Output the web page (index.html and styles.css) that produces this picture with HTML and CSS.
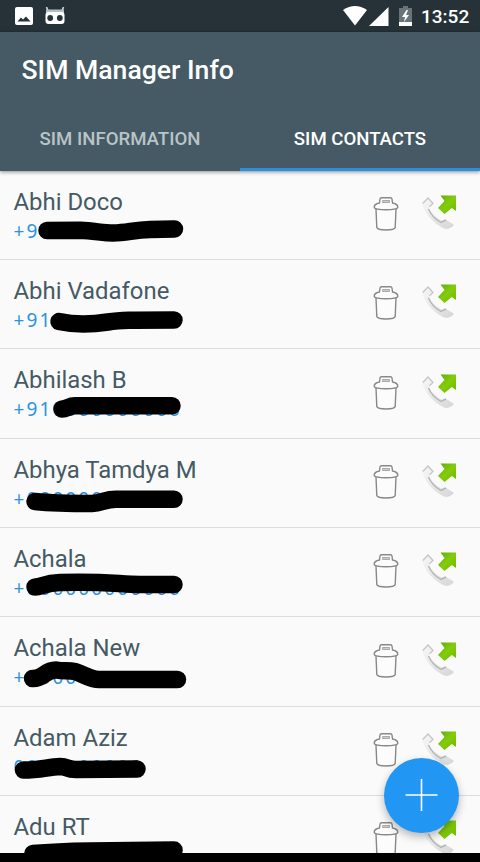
FILE: index.html
```html
<!DOCTYPE html>
<html lang="en">

<head>
  <meta charset="UTF-8" />
  <meta name="viewport" content="width=device-width, initial-scale=1.0" />
  <title>SIM Manager Info</title>
  <link rel="stylesheet" href="styles.css">
</head>

<body>
  <!-- shared icons -->
  <svg class="defs" width="0" height="0">
    <defs>
      <linearGradient id="green" x1="0" y1="0" x2="1" y2="1">
        <stop offset="0" stop-color="#5da80e" />
        <stop offset="0.5" stop-color="#84cc0a" />
        <stop offset="1" stop-color="#6db600" />
      </linearGradient>
      <linearGradient id="grey" x1="0" y1="0" x2="1" y2="1">
        <stop offset="0" stop-color="#f8f8f8" />
        <stop offset="1" stop-color="#d6d6d6" />
      </linearGradient>
      <symbol id="trash" viewBox="0 0 26 36">
        <path d="M3 13 L3.800 31.500 Q4.500 34 13 34 Q21.500 34 22.200 31.500 L23 13" fill="#fcfcfc" stroke="#888" stroke-width="1.4" />
        <path d="M1.200 11.500 Q1 8 6.500 7 L7 3 Q7.200 1.800 8.500 1.800 L17.500 1.800 Q18.800 1.800 19 3 L19.500 7 Q25 8 24.800 11.500 Q24 13.700 13 13.700 Q2 13.700 1.200 11.500 Z" fill="#fcfcfc" stroke="#888" stroke-width="1.4" />
        <path d="M9.500 6.500 V4.500 H16.500 V6.500 Z" fill="#ccc" stroke="#999" stroke-width=".8" />
      </symbol>
      <symbol id="call" viewBox="0 0 36 36">
        <path d="M1.500 8 L6.500 3.500 Q7.500 3 8.500 4 L12.500 9 L8 14 Q12 22 20.500 26.500 L24.500 25.500 L32.500 30.500 Q33 31.500 31.500 32.500 Q26.500 37 20 33 Q7 25.500 2 12.500 Q.8 9.500 1.500 8 Z" fill="url(#grey)" />
        <path d="M7.500 15 Q11 23.500 20 28.500 L25 26" fill="none" stroke="#b5b5b5" stroke-width="1.4" />
        <path d="M1.800 9.500 L7 4 L12 9.500 L8.500 12.800" fill="none" stroke="#c6c6c6" stroke-width="1.2" />
        <path d="M19.500 1.500 H35 V17 L30.800 14 L23.500 20 L17 14 L23.500 7 Z" fill="url(#green)" />
      </symbol>
    </defs>
  </svg>

  <div class="status-bar">
    <svg class="picture" width="18" height="18" viewBox="0 0 18 18">
      <rect x="0" y="0" width="18" height="18" rx="2" fill="#fff" />
      <path d="M2.500 14.500 L6 10.500 L8 12.500 L11 9.500 L15.500 14.500 Z" fill="#263238" />
    </svg>
    <svg class="robot" width="20" height="18" viewBox="0 0 20 18">
      <path d="M1.500 0 L3 4 M18.500 0 L17 4" stroke="#cfd8dc" stroke-width="1.6" />
      <path d="M1 2.500 H19 V6 H1 Z" fill="#b0bec5" />
      <rect x=".5" y="5" width="19" height="12" rx="3" fill="#fff" />
      <circle cx="5.2" cy="11" r="2.9" fill="#263238" />
      <circle cx="14.8" cy="11" r="2.9" fill="#263238" />
    </svg>
    <svg class="wifi" width="24" height="20" viewBox="0 0 24 20">
      <path d="M0 4 Q12 -4 24 4 L12 19.500 Z" fill="#fff" />
    </svg>
    <svg class="signal" width="20" height="19" viewBox="0 0 20 19">
      <path d="M19.500 0 V19 H0 Z" fill="#fff" />
    </svg>
    <svg class="battery" width="13" height="20" viewBox="0 0 13 20">
      <path d="M0 2 H4 V0 H9 V2 H13 V20 H0 Z" fill="#68747a" />
      <path d="M0 16 H13 V20 H0 Z" fill="#fff" />
      <path d="M7.500 4 L3 11 H6 L5 16 L10 9 H7 L9 4 Z" fill="#fff" />
    </svg>
    <span class="time">13:52</span>
  </div>

  <header class="header">
    <h1>SIM Manager Info</h1>
    <nav class="tabs">
      <a class="tab">SIM INFORMATION</a>
      <a class="tab active">SIM CONTACTS</a>
    </nav>
  </header>

  <main class="contacts">
    <div class="contact">
      <div class="info">
        <div class="name">Abhi Doco</div>
        <div class="phone">+9</div>
      </div>
      <svg class="icon-trash"><use href="#trash" /></svg>
      <svg class="icon-call"><use href="#call" /></svg>
      <svg class="marker"><path d="M47 60.500 L80 60.300 C95 61 103 63 113 63 C127 63 133 60 150 59.500 L174.500 59" /></svg>
    </div>
    <div class="contact">
      <div class="info">
        <div class="name">Abhi Vadafone</div>
        <div class="phone">+91</div>
      </div>
      <svg class="icon-trash"><use href="#trash" /></svg>
      <svg class="icon-call"><use href="#call" /></svg>
      <svg class="marker"><path d="M59 62.500 C75 66 95 65 108 63 C120 61 130 61 174 61" /></svg>
    </div>
    <div class="contact">
      <div class="info">
        <div class="name">Abhilash B</div>
        <div class="phone">+91<span>0000000000</span></div>
      </div>
      <svg class="icon-trash"><use href="#trash" /></svg>
      <svg class="icon-call"><use href="#call" /></svg>
      <svg class="marker"><path d="M62 60 C67 60 69 56.800 75 56.800 L172 56.800" /></svg>
    </div>
    <div class="contact">
      <div class="info">
        <div class="name">Abhya Tamdya M</div>
        <div class="phone">+<span>000000</span></div>
      </div>
      <svg class="icon-trash"><use href="#trash" /></svg>
      <svg class="icon-call"><use href="#call" /></svg>
      <svg class="marker"><path d="M35 63.500 C50 65 80 65.500 92 65.500 C102 65 105 61.300 116 61.300 L174 61.300" /></svg>
    </div>
    <div class="contact">
      <div class="info">
        <div class="name">Achala</div>
        <div class="phone">+<span>000000000000</span></div>
      </div>
      <svg class="icon-trash"><use href="#trash" /></svg>
      <svg class="icon-call"><use href="#call" /></svg>
      <svg class="marker"><path d="M35 60 C42 60 44 56 60 55.500 C105 54 120 57.500 140 57.500 L174 57.500" /></svg>
    </div>
    <div class="contact">
      <div class="info">
        <div class="name">Achala New</div>
        <div class="phone">+<span>00000</span></div>
      </div>
      <svg class="icon-trash"><use href="#trash" /></svg>
      <svg class="icon-call"><use href="#call" /></svg>
      <svg class="marker"><path d="M32.500 61.500 C44 62 44 53 56 53 C64 54.500 68 53 75 54.500 C84 57.500 90 62.500 99 62.500 L177.500 62.500" /></svg>
    </div>
    <div class="contact">
      <div class="info">
        <div class="name">Adam Aziz</div>
        <div class="phone"><span>0000000000</span></div>
      </div>
      <svg class="icon-trash"><use href="#trash" /></svg>
      <svg class="icon-call"><use href="#call" /></svg>
      <svg class="marker"><path d="M23.500 64 C40 64 48 61 60 60.500 C68 60.500 66 63.500 76 63.500 L137 63" /></svg>
    </div>
    <div class="contact">
      <div class="info">
        <div class="name">Adu RT</div>
      </div>
      <svg class="icon-trash"><use href="#trash" /></svg>
      <svg class="icon-call"><use href="#call" /></svg>
      <svg class="marker"><path d="M33 58.500 C45 57.500 60 56.500 90 56 L174 55" /></svg>
    </div>
  </main>

  <button class="add-button" type="button" aria-label="Add contact">
    <svg width="34" height="34" viewBox="0 0 34 34">
      <path d="M16.500 1 V33 M.5 17 H32.500" stroke="#fff" stroke-width="1.6" />
    </svg>
  </button>
  <footer class="bottom-bar"></footer>
</body>

</html>
```
FILE: styles.css
```css
* {
  box-sizing: border-box;
}

body {
  font-family: Roboto, "Noto Sans", sans-serif;
  background-color: #fafafa;
  margin: 0;
  height: 862px;
  display: flex;
  flex-direction: column;
  overflow: hidden;
  position: relative;
}

svg {
  display: block;
  flex: none;
}

.defs {
  position: absolute;
}

.status-bar {
  height: 32px;
  flex: none;
  display: flex;
  align-items: center;
  padding: 0 10px 0 15px;
  background-color: #263238;
}

.robot {
  margin-left: 12px;
}

.wifi {
  margin-left: auto;
}

.signal {
  margin-left: 2px;
}

.battery {
  margin-left: 10px;
}

.time {
  width: 49px;
  margin-left: 9px;
  color: #fff;
  font-size: 19px;
  font-weight: 500;
  line-height: 33px;
  white-space: nowrap;
}

.header {
  height: 138.6px;
  flex: none;
  background-color: #455a64;
  box-shadow: 0 1px 4px rgba(0, 0, 0, 0.45);
  z-index: 1;
}

h1 {
  margin: 0;
  padding-left: 21.5px;
  height: 77px;
  line-height: 76px;
  color: #fff;
  font-size: 26.6px;
  font-weight: 500;
}

.tabs {
  display: flex;
  height: 61.6px;
}

.tab {
  flex: 1;
  text-align: center;
  line-height: 61px;
  font-size: 18.6px;
  font-weight: 500;
  color: #b9c4c9;
}

.tab.active {
  color: #fff;
  border-bottom: 3px solid #2b8fdc;
}

.contacts {
  flex: 1;
  min-height: 0;
  overflow: hidden;
}

.contact {
  position: relative;
  display: flex;
  height: 89.35px;
  padding: 17px 23px 0 13.5px;
  border-bottom: 1px solid #dcdcdc;
}

.info {
  flex: 1;
}

.name {
  color: #455a64;
  font-size: 23.9px;
  line-height: 29px;
}

.phone {
  color: #2b93dc;
  font-family: "Noto Sans", sans-serif;
  font-size: 19px;
  line-height: 29px;
  letter-spacing: 2.1px;
}

.icon-trash {
  width: 26px;
  height: 36px;
  margin: 8.4px 1px 0 -1px;
}

.icon-call {
  width: 36px;
  height: 36px;
  margin: 6.4px 0 0 21px;
}

/* pen stroke that hides the number */
.marker {
  position: absolute;
  left: 0;
  top: -0.6px;
  width: 220px;
  height: 89px;
}

.marker path {
  fill: none;
  stroke: #000;
  stroke-width: 17.5px;
  stroke-linecap: round;
  stroke-linejoin: round;
}

.add-button {
  position: absolute;
  right: 21px;
  bottom: 29.5px;
  width: 75px;
  height: 75px;
  padding: 0;
  display: flex;
  align-items: center;
  justify-content: center;
  border: none;
  border-radius: 50%;
  background-color: #2196f3;
  box-shadow: 0 4px 9px rgba(0, 0, 0, 0.28);
}

.bottom-bar {
  height: 9px;
  flex: none;
  background-color: #000;
  z-index: 1;
}
```
